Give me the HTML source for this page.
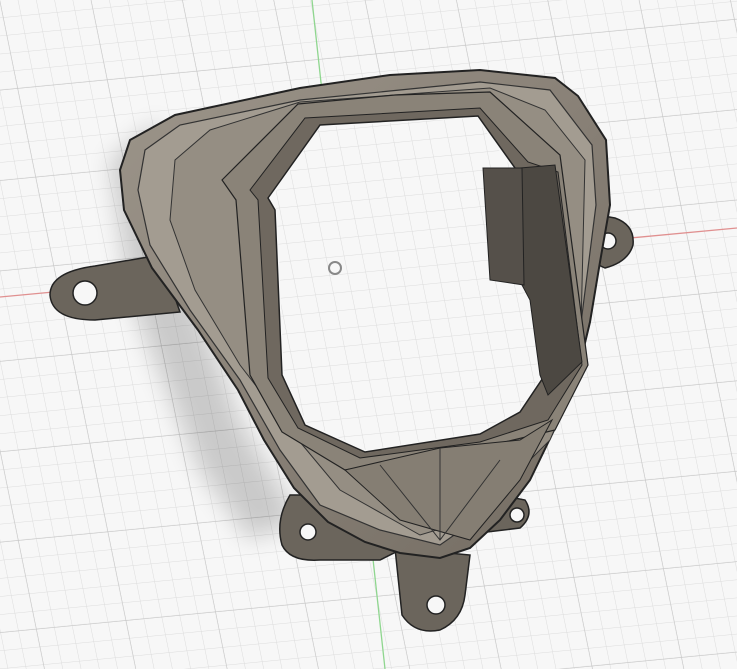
<!DOCTYPE html>
<html><head><style>
html,body{margin:0;padding:0;width:737px;height:669px;overflow:hidden;background:#f7f7f7}
</style></head><body>
<svg width="737" height="669" viewBox="0 0 737 669" xmlns="http://www.w3.org/2000/svg">
<defs>
<pattern id="g" width="18" height="18" patternUnits="userSpaceOnUse" patternTransform="rotate(-5.5) skewX(6)">
<path d="M18 0V18M0 18H18" stroke="#dcdcdc" stroke-width="1" fill="none"/>
</pattern>
<pattern id="G" width="90" height="90" patternUnits="userSpaceOnUse" patternTransform="rotate(-5.5) skewX(6)">
<path d="M90 0V90M0 90H90" stroke="#c6c6c6" stroke-width="1.2" fill="none"/>
</pattern>
<linearGradient id="body" x1="0" y1="0" x2="1" y2="1">
<stop offset="0" stop-color="#9c958a"/><stop offset="0.5" stop-color="#898177"/><stop offset="1" stop-color="#726b61"/>
</linearGradient>
<filter id="sh"><feGaussianBlur stdDeviation="12"/></filter>
</defs>
<rect width="737" height="669" fill="#f7f7f7"/>
<rect width="737" height="669" fill="url(#g)"/>
<rect width="737" height="669" fill="url(#G)"/>
<line x1="312" y1="0" x2="385" y2="669" stroke="#8fd68f" stroke-width="1.3"/>
<line x1="0" y1="297" x2="737" y2="228" stroke="#e09090" stroke-width="1.3"/>
<path d="M110 160 L160 120 L180 260 L240 420 L300 520 L250 540 L200 470 L130 300 Z" fill="#000" opacity="0.18" filter="url(#sh)"/>
<!-- left tab -->
<path d="M160 255 L95 266 Q50 272 50 295 Q52 320 95 320 L180 312 Z" fill="#6b655c" stroke="#222" stroke-width="1.5"/>
<circle cx="85" cy="293" r="12" fill="#f7f7f7" stroke="#222" stroke-width="1.5"/>
<!-- right tab -->
<path d="M598 215 L615 218 Q635 225 633 245 Q628 262 605 268 L592 262 Z" fill="#6b655c" stroke="#222" stroke-width="1.5"/>
<circle cx="608" cy="241" r="8" fill="#f7f7f7" stroke="#222" stroke-width="1.5"/>
<!-- bottom tabs -->
<path d="M290 495 Q275 520 282 545 Q290 562 320 560 L380 560 L420 540 L520 528 Q535 515 525 500 L500 495 Z" fill="#6b655c" stroke="#222" stroke-width="1.5"/>
<circle cx="308" cy="532" r="8" fill="#f7f7f7" stroke="#222" stroke-width="1.5"/>
<circle cx="517" cy="515" r="7" fill="#f7f7f7" stroke="#222" stroke-width="1.5"/>
<path d="M395 548 L402 615 Q415 635 440 630 Q462 620 465 595 L470 555 Z" fill="#6b655c" stroke="#222" stroke-width="1.5"/>
<circle cx="436" cy="605" r="9" fill="#f7f7f7" stroke="#222" stroke-width="1.5"/>
<!-- main body -->
<path d="M130 140 L175 115 L300 88 L390 75 L480 70 L555 78 L578 96 L606 140 L610 205 L600 262 L590 322 L578 372 L558 422 L530 480 L500 520 L470 548 L440 558 L400 553 L365 542 L328 522 L294 488 L264 440 L238 390 L198 330 L152 268 L124 210 L120 170 Z" fill="url(#body)" stroke="#222" stroke-width="2"/>
<path d="M145 150 L180 125 L300 100 L480 82 L550 90 L592 145 L596 205 L575 370 L545 430 L490 510 L440 545 L380 530 L320 505 L280 450 L240 380 L190 310 L150 245 L138 190 Z" fill="#a39c91" stroke="#333" stroke-width="1.2"/>
<path d="M175 160 L210 130 L300 102 L490 88 L545 110 L585 160 L580 370 L550 440 L470 520 L420 535 L340 490 L290 430 L240 365 L195 290 L170 220 Z" fill="#958e83" stroke="#333" stroke-width="1"/>
<!-- inner wall ring -->
<path d="M222 180 L298 104 L395 95 L490 92 L560 155 L588 365 L555 430 L480 448 L345 470 L282 432 L250 375 L236 200 Z" fill="#8a8378" stroke="#222" stroke-width="1.2"/>
<path d="M250 190 L305 118 L480 108 L528 162 L558 172 L582 365 L548 420 L480 442 L360 458 L298 428 L268 378 L258 200 Z" fill="#6f685f" stroke="#222" stroke-width="1"/>
<!-- hole -->
<path d="M268 198 L320 125 L478 116 L515 168 L525 200 L555 360 L520 412 L480 434 L365 452 L305 425 L282 375 L275 210 Z" fill="#f7f7f7" stroke="#222" stroke-width="1.5"/>
<path d="M270 200 L320 127 L476 118 L513 170 L523 200 L553 360 L518 410 L478 432 L366 450 L307 423 L284 375 L277 210 Z" fill="url(#g)" stroke="none"/>
<!-- right dark wall -->
<path d="M520 168 L555 165 L582 362 L548 395 L540 375 L530 300 L522 285 Z" fill="#4c4842" stroke="#222" stroke-width="1"/>
<path d="M483 168 L522 168 L524 285 L490 280 Z" fill="#55504a" stroke="#222" stroke-width="1"/>
<circle cx="335" cy="268" r="6" fill="none" stroke="#888" stroke-width="2"/>
<!-- bottom chevron detail -->
<path d="M345 470 L440 448 L520 440 L552 420 L520 480 L470 540 L400 520 Z" fill="#857e73" stroke="#222" stroke-width="1"/>
<path d="M380 465 L440 540 L500 460" fill="none" stroke="#333" stroke-width="1"/>
<path d="M440 448 L440 540" fill="none" stroke="#333" stroke-width="1"/>
</svg>
</body></html>
